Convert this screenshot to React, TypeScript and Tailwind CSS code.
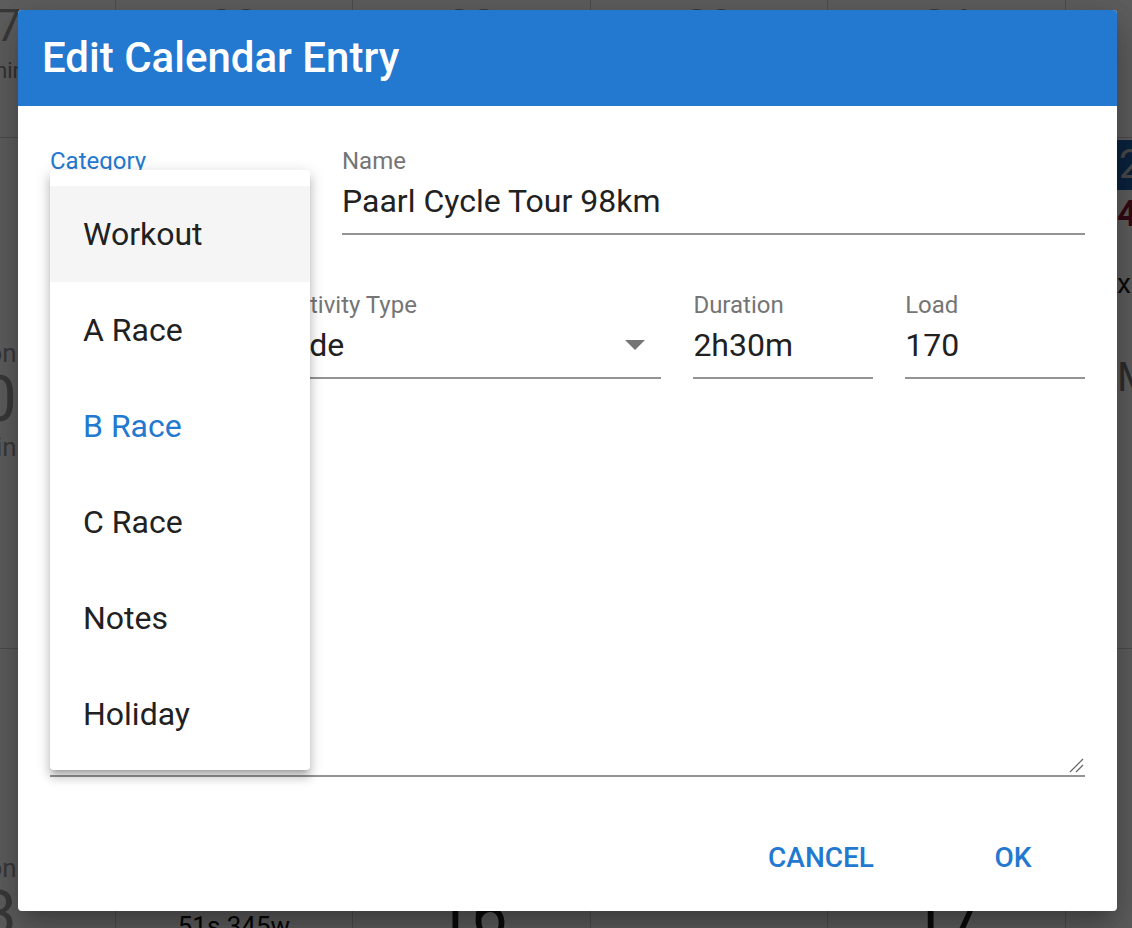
import React from 'react';

const cols = ['27', '23', '22', '23', '24', '25'];

function CalendarBackdrop() {
  return (
    <div className="flex h-[928px] w-full flex-col overflow-hidden bg-white font-['Roboto',sans-serif] text-[#9a9a9a]">
      <div className="ml-[-122px] flex h-[138px] shrink-0 border-b border-[#d2d2d2]">
        {cols.map((n, i) => (
          <div key={i} className="flex w-[237.6px] shrink-0 flex-col items-center border-r border-[#d2d2d2] pt-[4px]">
            <span className="text-[44px] leading-[44px]">{n}</span>
            <span className="mt-[6px] pl-[20px] text-[22px] text-[#8a8a8a]">{i === 0 ? 'min' : ''}</span>
          </div>
        ))}
      </div>
      <div className="ml-[-122px] flex h-[511px] shrink-0 border-b border-[#d2d2d2]">
        {cols.map((n, i) => (
          <div key={i} className="flex w-[237.6px] shrink-0 flex-col items-center border-r border-[#d2d2d2]">
            {i === 5 ? (
              <div className="flex w-full flex-col items-start pl-[51px]">
                <div className="mt-[2px] flex h-[50px] w-[60px] items-center bg-[#1f5fa8] pl-[2px] text-[40px] text-[#c8c8c8]">2</div>
                <span className="mt-[4px] text-[36px] font-bold leading-[40px] text-[#8c1b3c]">4</span>
                <span className="mt-[34px] text-[28px] leading-[32px] text-[#222]">x</span>
                <span className="mt-[56px] text-[40px] leading-[44px] text-[#7a7a7a]">M</span>
              </div>
            ) : i === 0 ? (
              <div className="mt-[200px] flex w-full flex-col items-end pr-[98px]">
                <span className="text-[26px] leading-[30px]">Session</span>
                <span className="text-[64px] leading-[64px]">0</span>
                <span className="text-[26px] leading-[30px]">min</span>
              </div>
            ) : null}
          </div>
        ))}
      </div>
      <div className="ml-[-122px] flex h-[400px] shrink-0">
        {['3', '51s 345w', '16', '', '17', ''].map((t, i) => (
          <div key={i} className="flex w-[237.6px] shrink-0 flex-col items-center border-r border-[#d2d2d2]">
            {i === 0 ? (
              <div className="mt-[204px] flex w-full flex-col items-end pr-[98px]">
                <span className="text-[26px] leading-[30px]">Session</span>
                <span className="text-[64px] leading-[64px]">3</span>
              </div>
            ) : i === 1 ? (
              <span className="mt-[258px] text-[26px] text-[#111]">{t}</span>
            ) : t ? (
              <span className="mt-[236px] text-[64px] leading-[64px] text-[#222]">{t}</span>
            ) : null}
          </div>
        ))}
      </div>
    </div>
  );
}

function Field({
  label,
  value,
  className = '',
  labelClass = 'text-[#757575]',
  arrow = false,
}: {
  label: string;
  value: string;
  className?: string;
  labelClass?: string;
  arrow?: boolean;
}) {
  return (
    <div className={`flex flex-col ${className}`}>
      <span className={`h-[28px] whitespace-nowrap text-[24px] leading-[28px] ${labelClass}`}>{label}</span>
      <div className="mt-[6px] flex items-center justify-between border-b-2 border-[#949494] pb-[12px]">
        <span className="h-[40px] whitespace-nowrap text-[32px] leading-[40px] text-[#212121]">{value}</span>
        {arrow && (
          <svg width="20" height="10" viewBox="0 0 20 10" className="mr-[16px]">
            <polygon points="0,0 20,0 10,10" fill="#757575" />
          </svg>
        )}
      </div>
    </div>
  );
}

const items = ['Workout', 'A Race', 'B Race', 'C Race', 'Notes', 'Holiday'];

export default function App() {
  return (
    <div className="relative h-[928px] w-full overflow-hidden font-['Roboto',sans-serif]">
      <CalendarBackdrop />
      <div className="absolute inset-0 bg-black/[0.63]" />

      <div className="absolute left-[18px] top-[10px] flex h-[901px] w-[1099px] flex-col rounded-[4px] bg-white shadow-[0_11px_15px_-7px_rgba(0,0,0,0.2),0_24px_38px_3px_rgba(0,0,0,0.14),0_9px_46px_8px_rgba(0,0,0,0.12)]">
        <div className="flex h-[96px] shrink-0 items-center rounded-t-[4px] bg-[#2378d0] pl-[24px]">
          <h1 className="text-[42px] font-medium leading-none text-white">Edit Calendar Entry</h1>
        </div>

        <div className="flex flex-1 flex-col px-[32px] pt-[41px]">
          <div className="flex gap-[32px]">
            <Field label="Category" value="B Race" className="w-[260px]" labelClass="text-[#2378d0]" arrow />
            <Field label="Name" value="Paarl Cycle Tour 98km" className="flex-1" />
          </div>

          <div className="mt-[56px] flex gap-[32px]">
            <Field label="Date" value="2019/03/10" className="w-[200px]" />
            <Field label="Activity Type" value="Ride" className="w-[380px]" arrow />
            <Field label="Duration" value="2h30m" className="w-[180px]" />
            <Field label="Load" value="170" className="w-[180px]" />
          </div>

          <div className="mt-[56px] flex flex-col">
            <span className="h-[28px] text-[24px] leading-[28px] text-[#757575]">Notes</span>
            <div className="flex h-[314px] items-end justify-end border-b-2 border-[#949494] pb-[2px]">
              <svg width="16" height="16" viewBox="0 0 16 16" className="mr-[1px]">
                <line x1="2" y1="15" x2="15" y2="2" stroke="#666" strokeWidth="1.2" />
                <line x1="8" y1="15" x2="15" y2="8" stroke="#666" strokeWidth="1.2" />
              </svg>
            </div>
          </div>

          <div className="mt-[53px] flex justify-end gap-[59px] pr-[8px]">
            <button className="h-[56px] w-[138px] whitespace-nowrap text-[28px] font-medium text-[#2378d0]">CANCEL</button>
            <button className="h-[56px] w-[128px] text-[28px] font-medium text-[#2378d0]">OK</button>
          </div>
        </div>

        <div className="absolute left-[32px] top-[160px] flex h-[600px] w-[260px] flex-col rounded-[4px] bg-white pt-[16px] shadow-[0_5px_5px_-3px_rgba(0,0,0,0.2),0_8px_10px_1px_rgba(0,0,0,0.14),0_3px_14px_2px_rgba(0,0,0,0.12)]">
          {items.map((it, i) => (
            <div
              key={it}
              className={`flex h-[96px] shrink-0 items-center pl-[33px] text-[32px] ${
                i === 0 ? 'bg-[#f5f5f5]' : ''
              } ${i === 2 ? 'text-[#2378d0]' : 'text-[#212121]'}`}
            >
              {it}
            </div>
          ))}
        </div>
      </div>
    </div>
  );
}
